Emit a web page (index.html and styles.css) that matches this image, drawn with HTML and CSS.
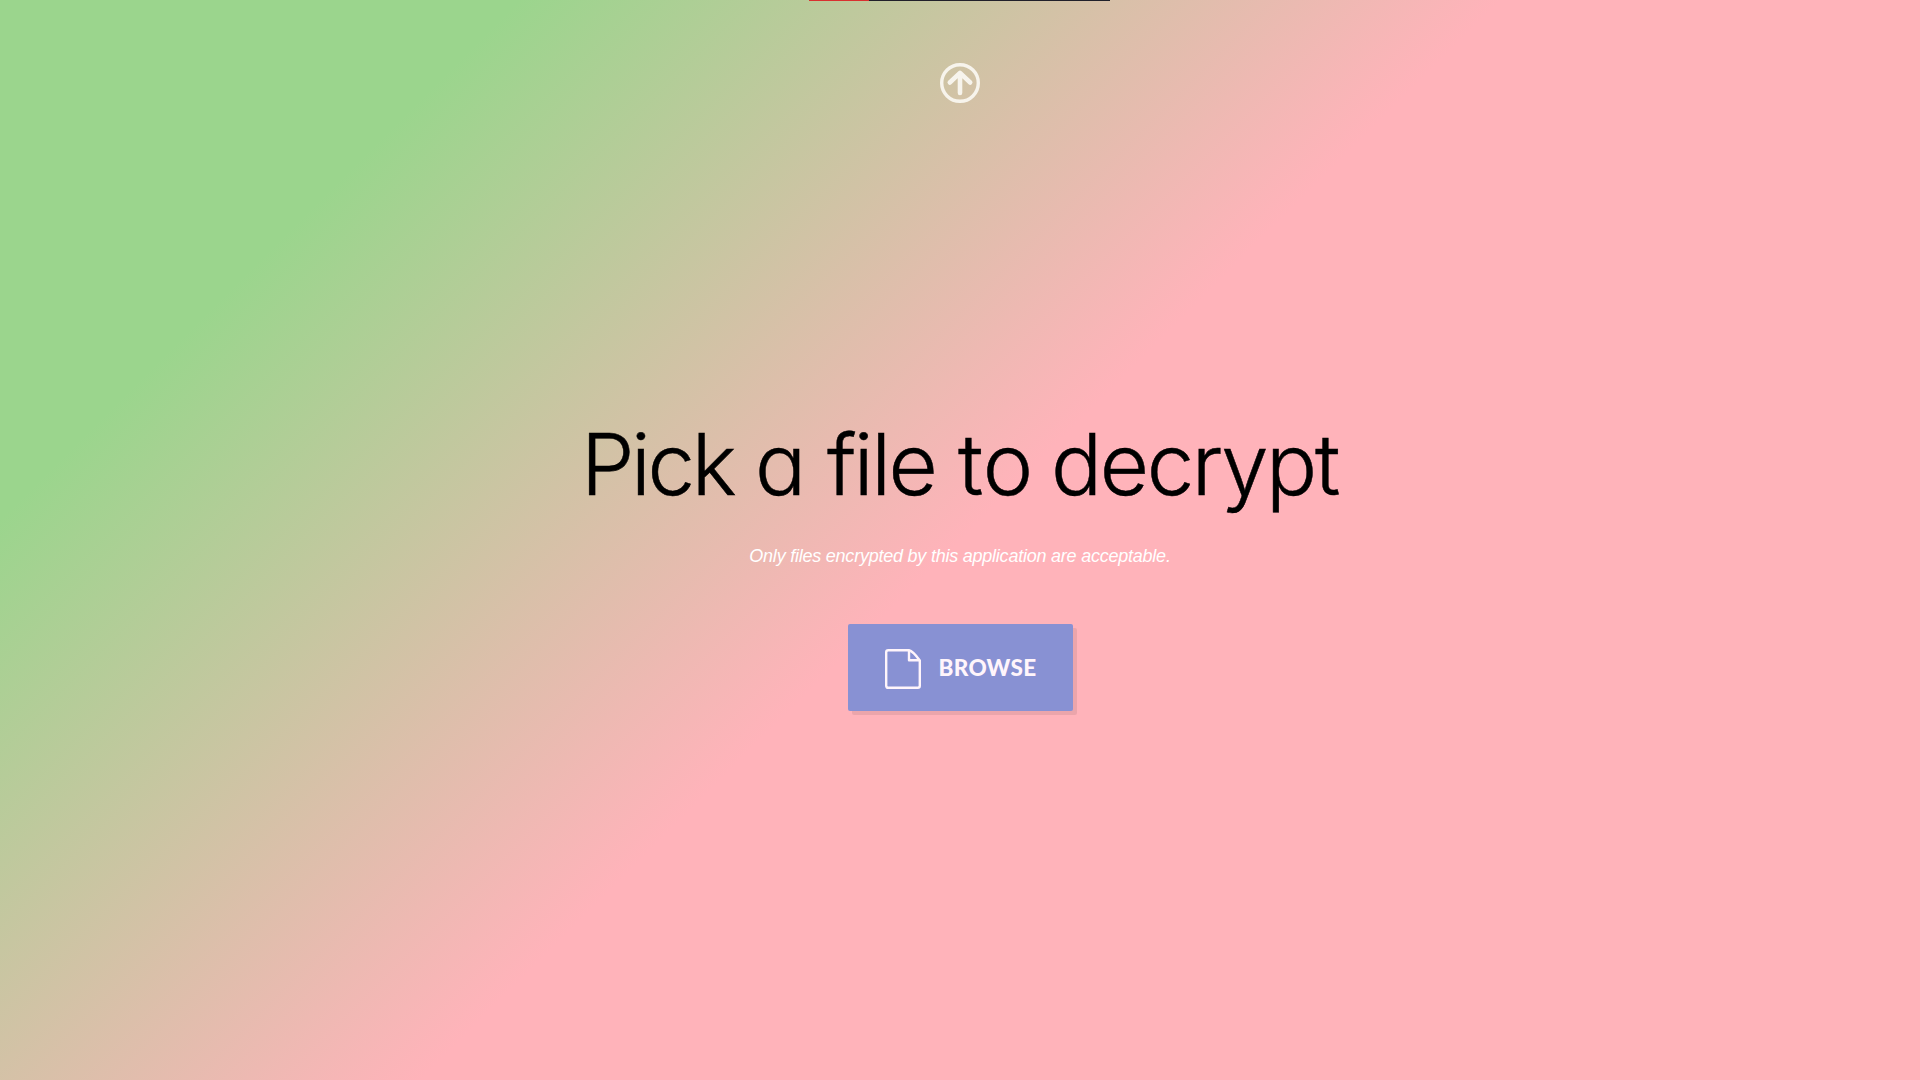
FILE: index.html
```html
<!DOCTYPE html>
<html lang="en">
<head>
<meta charset="utf-8">
<title>Decrypt a file</title>
<link rel="stylesheet" href="styles.css">
</head>
<body>
<div class="progress"><div class="progress-value"></div></div>
<header class="top">
  <svg class="up-icon" viewBox="0 0 40 40" fill="none" stroke="currentColor">
    <circle cx="20" cy="20" r="18.3" stroke-width="3.4"/>
    <path d="M20 30V10.500M9.800 19.500L20 9.800L30.200 19.500" stroke-width="4.600" stroke-linecap="round" stroke-linejoin="round"/>
  </svg>
</header>
<main class="picker">
  <h1 class="title"><span class="w1">Pick</span> <span class="w2">a</span> <span class="w3">file</span> <span class="w4">to</span> <span class="w5">decrypt</span></h1>
  <p class="note">Only files encrypted by this application are acceptable.</p>
  <button class="browse" type="button">
    <svg class="file-icon" viewBox="0 0 36 40" fill="none" stroke="currentColor" stroke-width="2.400" stroke-linejoin="round">
      <path d="M3.200 1.200H24Q28 2 34.800 11.500V36.800Q34.800 38.800 32.800 38.800H3.200Q1.200 38.800 1.200 36.800V3.200Q1.200 1.200 3.200 1.200Z"/>
      <path d="M24 1.200V11.300H34.800"/>
    </svg>
    <span class="label">BROWSE</span>
  </button>
</main>
</body>
</html>
```
FILE: styles.css
```css
body {
  margin: 0;
  height: 1080px;
  overflow: hidden;
  background: linear-gradient(135deg, #9bd58d 17.3%, #ffb3ba 50%);
  font-family: "Liberation Sans", Arial, sans-serif;
  display: flex;
  flex-direction: column;
  align-items: center;
}
.progress { width: 301px; height: 1px; margin-right: 1px; background: #20202a; }
.progress-value { width: 60px; height: 1px; background: #d8302f; }
.top { padding-top: 62px; height: 40px; color: #f7f4ec; }
.up-icon { display: block; width: 40px; height: 40px; }
.picker { display: flex; flex-direction: column; align-items: center; padding-top: 307px; }
.title {
  margin: 0;
  width: 758px;
  height: 110px;
  display: grid;
  grid-template-columns: 174px 72px 131px 93px 288px;
  font: 300 85px/110px Inter, sans-serif;
  font-feature-settings: "cv11";
  -webkit-text-stroke: 0.5px #000;
  color: #000;
  white-space: nowrap;
}
.w1 { letter-spacing: -3.3px; }
.w3 { letter-spacing: -2.5px; }
.w5 { letter-spacing: -2.4px; }
.note { margin: 16px 0 0; font-size: 18px; line-height: 40px; letter-spacing: -0.23px; font-style: italic; color: #fff; }
.browse {
  margin-top: 48px;
  width: 225px;
  height: 87px;
  padding: 0 0 0 37px;
  border: 0;
  border-radius: 2px;
  background: #8891d3;
  box-shadow: 4px 4px 0 rgba(0, 0, 0, 0.08);
  color: #fff5fb;
  display: flex;
  align-items: center;
  gap: 18px;
}
.file-icon { width: 36px; height: 40px; margin-top: 3px; }
.label { font: 900 22.5px/28px Lato, sans-serif; letter-spacing: 0.3px; }
```
